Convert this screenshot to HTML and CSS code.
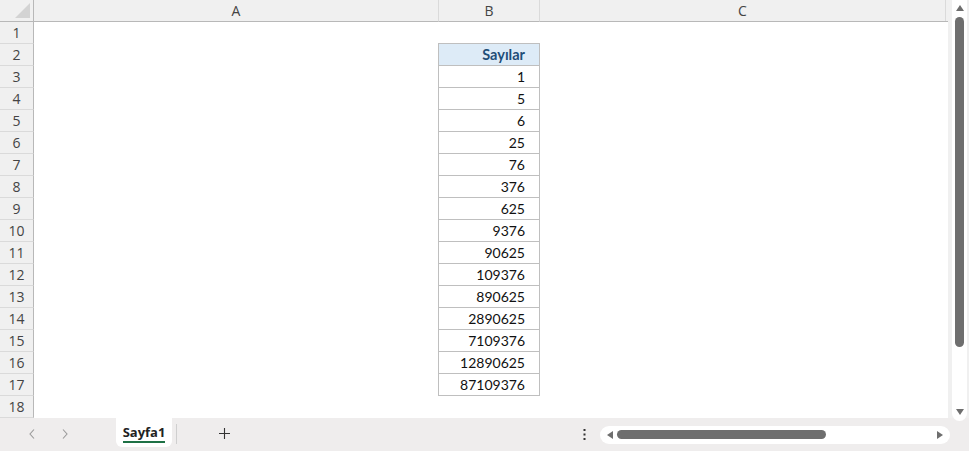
FILE: index.html
```html
<!DOCTYPE html>
<html lang="tr">
<head>
<meta charset="utf-8">
<title>Sayfa1</title>
<link rel="stylesheet" href="styles.css">
</head>
<body>
<div class="app">
  <div class="top">
    <div class="sheet">
      <div class="row hdr">
        <div class="corner"><svg width="15" height="15" viewBox="0 0 15 15"><polygon points="15,0 15,15 0,15" fill="#d3d3d3"/></svg></div>
        <div class="ch cA">A</div>
        <div class="ch cB">B</div>
        <div class="ch cC"><span class="cctext">C</span></div>
      </div>
      <div class="row"><div class="rh">1</div><div class="cA"></div><div class="cB first"></div><div class="cC"></div></div>
      <div class="row"><div class="rh">2</div><div class="cA"></div><div class="cB tb th">Sayılar</div><div class="cC"></div></div>
      <div class="row"><div class="rh">3</div><div class="cA"></div><div class="cB tb">1</div><div class="cC"></div></div>
      <div class="row"><div class="rh">4</div><div class="cA"></div><div class="cB tb">5</div><div class="cC"></div></div>
      <div class="row"><div class="rh">5</div><div class="cA"></div><div class="cB tb">6</div><div class="cC"></div></div>
      <div class="row"><div class="rh">6</div><div class="cA"></div><div class="cB tb">25</div><div class="cC"></div></div>
      <div class="row"><div class="rh">7</div><div class="cA"></div><div class="cB tb">76</div><div class="cC"></div></div>
      <div class="row"><div class="rh">8</div><div class="cA"></div><div class="cB tb">376</div><div class="cC"></div></div>
      <div class="row"><div class="rh">9</div><div class="cA"></div><div class="cB tb">625</div><div class="cC"></div></div>
      <div class="row"><div class="rh">10</div><div class="cA"></div><div class="cB tb">9376</div><div class="cC"></div></div>
      <div class="row"><div class="rh">11</div><div class="cA"></div><div class="cB tb">90625</div><div class="cC"></div></div>
      <div class="row"><div class="rh">12</div><div class="cA"></div><div class="cB tb">109376</div><div class="cC"></div></div>
      <div class="row"><div class="rh">13</div><div class="cA"></div><div class="cB tb">890625</div><div class="cC"></div></div>
      <div class="row"><div class="rh">14</div><div class="cA"></div><div class="cB tb">2890625</div><div class="cC"></div></div>
      <div class="row"><div class="rh">15</div><div class="cA"></div><div class="cB tb">7109376</div><div class="cC"></div></div>
      <div class="row"><div class="rh">16</div><div class="cA"></div><div class="cB tb">12890625</div><div class="cC"></div></div>
      <div class="row"><div class="rh">17</div><div class="cA"></div><div class="cB tb">87109376</div><div class="cC"></div></div>
      <div class="row"><div class="rh">18</div><div class="cA"></div><div class="cB"></div><div class="cC"></div></div>
    </div>
    <div class="vscroll">
      <svg class="varrow up" width="8" height="6" viewBox="0 0 8 6"><polygon points="4,0 8,6 0,6" fill="#6e6e6e"/></svg>
      <div class="vthumb"></div>
      <div class="grow"></div>
      <svg class="varrow down" width="8" height="6" viewBox="0 0 8 6"><polygon points="0,0 8,0 4,6" fill="#6e6e6e"/></svg>
    </div>
  </div>
  <div class="bar">
    <div class="nav">
      <svg class="chev l" width="6" height="10" viewBox="0 0 6 10"><polyline points="5,0.5 1,5 5,9.5" fill="none" stroke="#9a9a9a" stroke-width="1.1"/></svg>
      <svg class="chev r" width="6" height="10" viewBox="0 0 6 10"><polyline points="1,0.5 5,5 1,9.5" fill="none" stroke="#9a9a9a" stroke-width="1.1"/></svg>
    </div>
    <div class="tab"><span class="tabname">Sayfa1</span></div>
    <div class="sep"></div>
    <svg class="plus" width="11" height="11" viewBox="0 0 11 11"><path d="M5.5 0V11M0 5.5H11" stroke="#333" stroke-width="1.1"/></svg>
    <div class="grow"></div>
    <svg class="dots" width="3" height="11" viewBox="0 0 3 11"><rect x="0.5" y="0" width="2" height="2" fill="#333"/><rect x="0.5" y="4.5" width="2" height="2" fill="#333"/><rect x="0.5" y="9" width="2" height="2" fill="#333"/></svg>
    <div class="hscroll">
      <svg class="harrow" width="6" height="8" viewBox="0 0 6 8"><polygon points="6,0 6,8 0,4" fill="#6e6e6e"/></svg>
      <div class="hthumb"></div>
      <div class="grow"></div>
      <svg class="harrow" width="6" height="8" viewBox="0 0 6 8"><polygon points="0,0 6,4 0,8" fill="#6e6e6e"/></svg>
    </div>
  </div>
</div>
</body>
</html>
```

FILE: styles.css
```css
* { box-sizing: border-box; }
html, body { margin: 0; padding: 0; }
body { width: 969px; height: 451px; overflow: hidden; background: #efeded; font-family: "Open Sans", "Noto Sans", sans-serif; }

.app { width: 969px; height: 451px; display: flex; flex-direction: column; }

.top { height: 418px; display: flex; background: #f0f0f0; }
.sheet { width: 948px; background: #ffffff; display: flex; flex-direction: column; }

.row { display: flex; height: 22px; flex: none; }
.hdr { background: #f0f0f0; }
.hdr > div { height: 22px; border-bottom: 1px solid #b8b8b8; }
.corner { width: 34px; border-right: 1px solid #b8b8b8; display: flex; align-items: flex-end; justify-content: flex-end; padding: 0 3px 3px 0; }
.ch { display: flex; align-items: center; justify-content: center; font-size: 14px; color: #444; }
.hdr .cB { border-left: 1px solid #dadada; border-right: 1px solid #dadada; }
.hdr .cC { padding-right: 2px; }
.cctext { flex: 1; height: 21px; display: flex; align-items: center; justify-content: center; border-right: 1px solid #dadada; }

.rh { width: 34px; flex: none; background: #f0f0f0; border-right: 1px solid #b8b8b8; border-bottom: 1px solid #dadada; display: flex; align-items: center; justify-content: center; font-size: 14px; color: #444; }
.cA { width: 404px; flex: none; }
.cB { width: 102px; flex: none; }
.cC { flex: 1; }

.first { border-bottom: 1px solid #bfbfbf; }
.tb { border: 1px solid #bfbfbf; border-top: 0; font-family: "Lato", "Open Sans", sans-serif; font-size: 14px; color: #111; display: flex; align-items: center; justify-content: flex-end; padding: 0 14px 0 0; }
.th { background: #ddebf7; font-weight: 700; color: #1f4e78; font-size: 14.5px; }

.vscroll { width: 15px; margin-left: 4px; height: 421px; margin-bottom: -3px; position: relative; z-index: 1; background: #ffffff; border-radius: 0 0 8px 8px; display: flex; flex-direction: column; align-items: center; }
.varrow.up { margin-top: 5px; flex: none; }
.vthumb { margin-top: 6px; width: 9px; height: 330px; border-radius: 5px; background: #6e6e6e; flex: none; }
.varrow.down { margin-bottom: 6px; flex: none; }
.grow { flex: 1; }

.bar { height: 33px; display: flex; align-items: center; background: #efeded; }
.nav { width: 116px; height: 33px; display: flex; align-items: center; padding-bottom: 2px; }
.chev.l { margin-left: 29px; }
.chev.r { margin-left: 27px; }
.tab { width: 56px; height: 29px; align-self: flex-start; background: #ffffff; border-radius: 0 0 6px 6px; display: flex; align-items: center; justify-content: center; }
.tabname { font-family: "Open Sans", sans-serif; font-weight: 700; font-size: 13px; color: #222; padding-top: 2px; padding-bottom: 1px; border-bottom: 2px solid #1e7145; line-height: 16px; }
.sep { width: 1px; height: 20px; background: #cfcfcf; margin-left: 4px; margin-bottom: 2px; }
.plus { margin-left: 42px; margin-bottom: 2px; }
.dots { margin-bottom: 0; }
.hscroll { width: 350px; height: 18px; margin-left: 14px; margin-right: 19px; background: #ffffff; border-radius: 9px; display: flex; align-items: center; padding: 0 7px; }
.hthumb { width: 209px; height: 9px; border-radius: 5px; background: #6e6e6e; margin-left: 4px; }
```
